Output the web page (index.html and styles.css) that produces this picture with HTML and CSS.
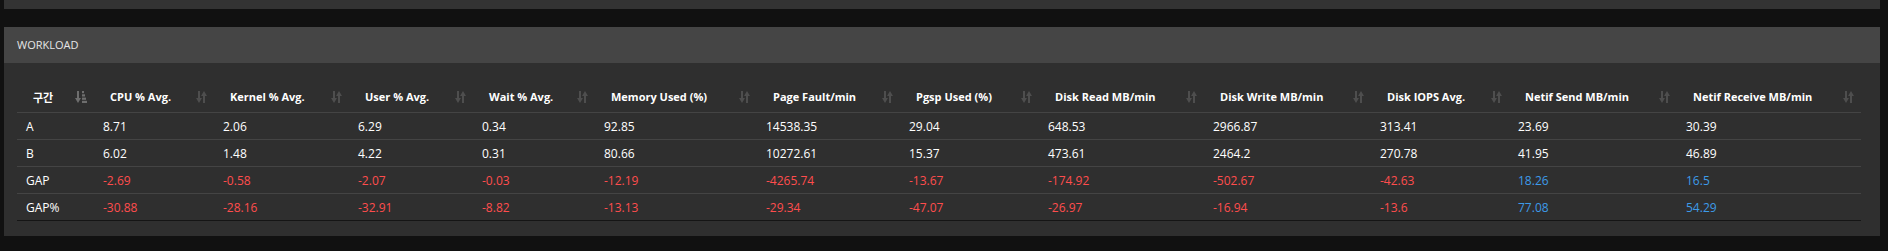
FILE: index.html
```html
<!DOCTYPE html>
<html lang="ko">
<head>
<meta charset="utf-8">
<title>Workload</title>
<link rel="stylesheet" href="styles.css">
</head>
<body>
<div class="page">
  <div class="panel-top"></div>
  <section class="panel">
    <header class="panel-head">WORKLOAD</header>
    <div class="panel-body">
      <table class="grid">
        <colgroup>
          <col class="w1"><col class="w2"><col class="w3"><col class="w4"><col class="w5"><col class="w6"><col class="w7"><col class="w8"><col class="w9"><col class="w10"><col class="w11"><col class="w12"><col class="w13">
        </colgroup>
        <thead>
          <tr>
            <th><div class="th-in"><span>구간</span><svg class="ico asc" viewBox="0 0 12 12"><rect x="2" y="0" width="2" height="8"/><polygon points="0,7 6,7 3,12"/><rect x="7" y="0" width="2" height="2.2"/><rect x="7" y="3.3" width="3" height="2.2"/><rect x="7" y="6.6" width="4" height="2.2"/><rect x="7" y="9.8" width="5" height="2.2"/></svg></div></th>
            <th><div class="th-in"><span>CPU % Avg.</span><svg class="ico" viewBox="0 0 11 12"><rect x="2" y="0" width="2" height="8"/><polygon points="0,7 6,7 3,12"/><rect x="7" y="4" width="2" height="8"/><polygon points="5,5 11,5 8,0"/></svg></div></th>
            <th><div class="th-in"><span>Kernel % Avg.</span><svg class="ico" viewBox="0 0 11 12"><rect x="2" y="0" width="2" height="8"/><polygon points="0,7 6,7 3,12"/><rect x="7" y="4" width="2" height="8"/><polygon points="5,5 11,5 8,0"/></svg></div></th>
            <th><div class="th-in"><span>User % Avg.</span><svg class="ico" viewBox="0 0 11 12"><rect x="2" y="0" width="2" height="8"/><polygon points="0,7 6,7 3,12"/><rect x="7" y="4" width="2" height="8"/><polygon points="5,5 11,5 8,0"/></svg></div></th>
            <th><div class="th-in"><span>Wait % Avg.</span><svg class="ico" viewBox="0 0 11 12"><rect x="2" y="0" width="2" height="8"/><polygon points="0,7 6,7 3,12"/><rect x="7" y="4" width="2" height="8"/><polygon points="5,5 11,5 8,0"/></svg></div></th>
            <th><div class="th-in"><span>Memory Used (%)</span><svg class="ico" viewBox="0 0 11 12"><rect x="2" y="0" width="2" height="8"/><polygon points="0,7 6,7 3,12"/><rect x="7" y="4" width="2" height="8"/><polygon points="5,5 11,5 8,0"/></svg></div></th>
            <th><div class="th-in"><span>Page Fault/min</span><svg class="ico" viewBox="0 0 11 12"><rect x="2" y="0" width="2" height="8"/><polygon points="0,7 6,7 3,12"/><rect x="7" y="4" width="2" height="8"/><polygon points="5,5 11,5 8,0"/></svg></div></th>
            <th><div class="th-in"><span>Pgsp Used (%)</span><svg class="ico" viewBox="0 0 11 12"><rect x="2" y="0" width="2" height="8"/><polygon points="0,7 6,7 3,12"/><rect x="7" y="4" width="2" height="8"/><polygon points="5,5 11,5 8,0"/></svg></div></th>
            <th><div class="th-in"><span>Disk Read MB/min</span><svg class="ico" viewBox="0 0 11 12"><rect x="2" y="0" width="2" height="8"/><polygon points="0,7 6,7 3,12"/><rect x="7" y="4" width="2" height="8"/><polygon points="5,5 11,5 8,0"/></svg></div></th>
            <th><div class="th-in"><span>Disk Write MB/min</span><svg class="ico" viewBox="0 0 11 12"><rect x="2" y="0" width="2" height="8"/><polygon points="0,7 6,7 3,12"/><rect x="7" y="4" width="2" height="8"/><polygon points="5,5 11,5 8,0"/></svg></div></th>
            <th><div class="th-in"><span>Disk IOPS Avg.</span><svg class="ico" viewBox="0 0 11 12"><rect x="2" y="0" width="2" height="8"/><polygon points="0,7 6,7 3,12"/><rect x="7" y="4" width="2" height="8"/><polygon points="5,5 11,5 8,0"/></svg></div></th>
            <th><div class="th-in"><span>Netif Send MB/min</span><svg class="ico" viewBox="0 0 11 12"><rect x="2" y="0" width="2" height="8"/><polygon points="0,7 6,7 3,12"/><rect x="7" y="4" width="2" height="8"/><polygon points="5,5 11,5 8,0"/></svg></div></th>
            <th><div class="th-in"><span>Netif Receive MB/min</span><svg class="ico" viewBox="0 0 11 12"><rect x="2" y="0" width="2" height="8"/><polygon points="0,7 6,7 3,12"/><rect x="7" y="4" width="2" height="8"/><polygon points="5,5 11,5 8,0"/></svg></div></th>
          </tr>
        </thead>
        <tbody>
          <tr>
            <td>A</td><td>8.71</td><td>2.06</td><td>6.29</td><td>0.34</td><td>92.85</td><td>14538.35</td><td>29.04</td><td>648.53</td><td>2966.87</td><td>313.41</td><td>23.69</td><td>30.39</td>
          </tr>
          <tr>
            <td>B</td><td>6.02</td><td>1.48</td><td>4.22</td><td>0.31</td><td>80.66</td><td>10272.61</td><td>15.37</td><td>473.61</td><td>2464.2</td><td>270.78</td><td>41.95</td><td>46.89</td>
          </tr>
          <tr>
            <td>GAP</td><td class="neg">-2.69</td><td class="neg">-0.58</td><td class="neg">-2.07</td><td class="neg">-0.03</td><td class="neg">-12.19</td><td class="neg">-4265.74</td><td class="neg">-13.67</td><td class="neg">-174.92</td><td class="neg">-502.67</td><td class="neg">-42.63</td><td class="pos">18.26</td><td class="pos">16.5</td>
          </tr>
          <tr>
            <td>GAP%</td><td class="neg">-30.88</td><td class="neg">-28.16</td><td class="neg">-32.91</td><td class="neg">-8.82</td><td class="neg">-13.13</td><td class="neg">-29.34</td><td class="neg">-47.07</td><td class="neg">-26.97</td><td class="neg">-16.94</td><td class="neg">-13.6</td><td class="pos">77.08</td><td class="pos">54.29</td>
          </tr>
        </tbody>
      </table>
    </div>
  </section>
</div>
</body>
</html>
```

FILE: styles.css
```css
html, body {
  margin: 0;
  padding: 0;
  background: #111111;
}

body {
  font-family: "Open Sans", "Noto Sans CJK KR", sans-serif;
  color: #ffffff;
}

.page {
  padding: 0 8px 0 4px;
}

.panel-top {
  height: 9px;
  background: #333333;
  margin-bottom: 18px;
}

.panel {
  background: #2f2f2f;
}

.panel-head {
  height: 36px;
  line-height: 36px;
  background: #454545;
  padding-left: 13px;
  font-size: 11px;
  color: #e6e6e6;
}

.panel-body {
  padding: 18px 19px 15px 13px;
}

.grid {
  width: 1844px;
  table-layout: fixed;
  border-collapse: collapse;
  border-bottom: 1px solid #151515;
}

.w1 { width: 77px; }
.w2 { width: 120px; }
.w3 { width: 135px; }
.w4 { width: 124px; }
.w5 { width: 122px; }
.w6 { width: 162px; }
.w7 { width: 143px; }
.w8 { width: 139px; }
.w9 { width: 165px; }
.w10 { width: 167px; }
.w11 { width: 138px; }
.w12 { width: 168px; }
.w13 { width: 184px; }

.grid th {
  height: 31px;
  padding: 0;
  border-bottom: 1px solid #444444;
  font-size: 11px;
  font-weight: 700;
  text-align: left;
  color: #ffffff;
}

.th-in {
  display: flex;
  align-items: center;
  justify-content: space-between;
  padding: 0 7px 0 16px;
}

.th-in span {
  white-space: nowrap;
}

.ico {
  width: 11px;
  height: 12px;
  fill: #4e4e4e;
  flex: none;
}

.ico.asc {
  width: 12px;
  fill: #6e6e6e;
}

.grid td {
  height: 26px;
  padding: 0 0 0 9px;
  border-bottom: 1px solid #444444;
  font-size: 12px;
  color: #ffffff;
  white-space: nowrap;
}

.grid tbody tr:last-child td {
  border-bottom: 1px solid #151515;
}

.grid td.neg {
  color: #ff4d4d;
}

.grid td.pos {
  color: #3d9be9;
}
```
